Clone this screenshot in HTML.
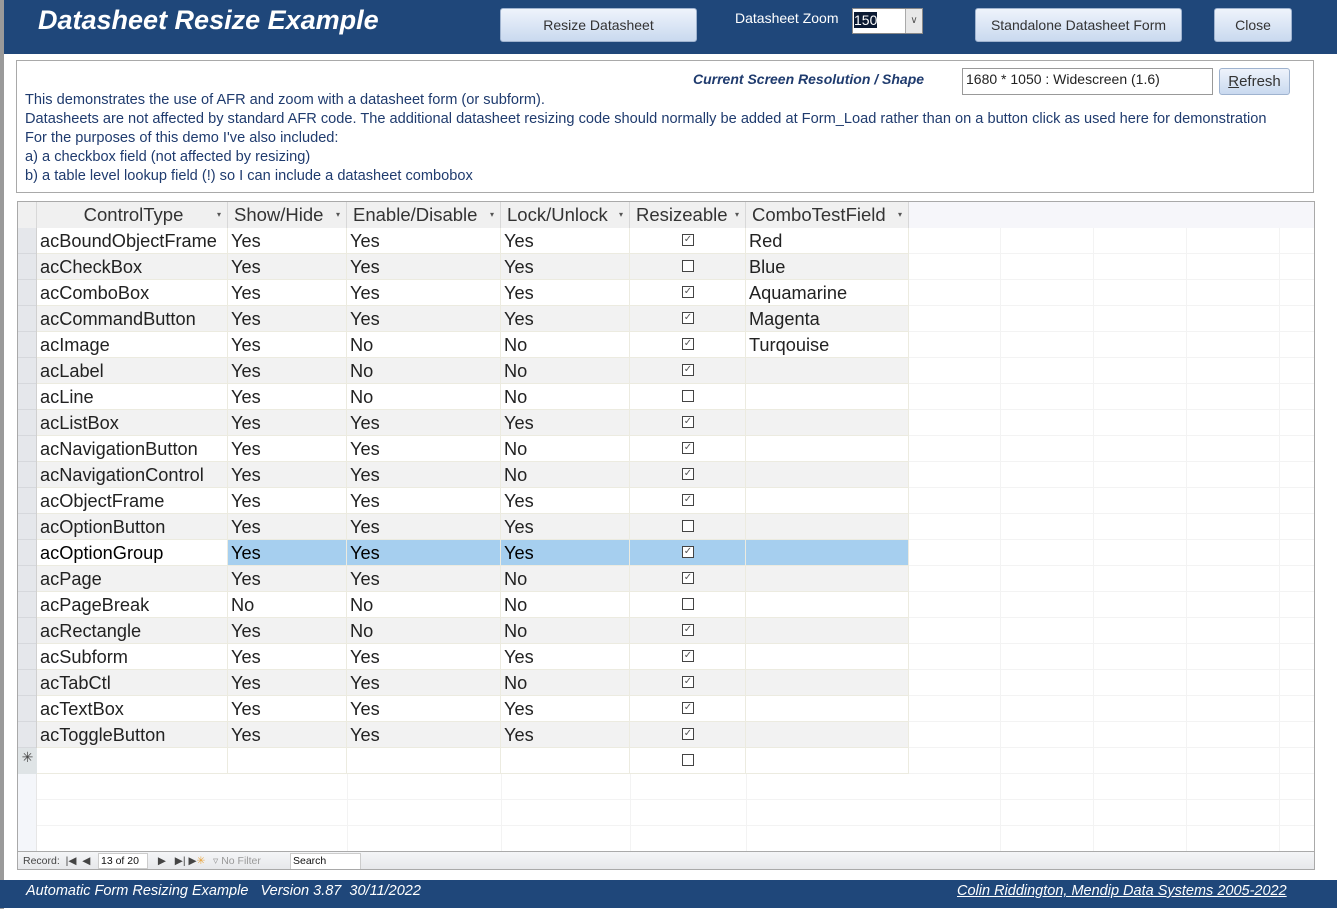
<!DOCTYPE html>
<html><head><meta charset="utf-8"><style>
*{box-sizing:border-box;margin:0;padding:0}
body{width:1337px;height:909px;position:relative;background:#fff;font-family:"Liberation Sans",sans-serif;overflow:hidden}
.a{position:absolute}
.btn{position:absolute;background:linear-gradient(#eef3fb,#c9d9ef);border:1px solid #9fb3cf;border-radius:3px;color:#333;font-size:14px;text-align:center}
.t{font-size:14.6px;color:#1f3b6e;position:absolute;left:25px;white-space:nowrap}
.ds{position:absolute;left:17px;top:201px;width:1298px;height:669px;border:1px solid #a9a9a9;background:#fff;overflow:hidden}
.row{position:absolute;left:0;height:26px;width:1296px}
.c{position:absolute;top:0;height:26px;border-right:1px solid #ecebe0;border-bottom:1px solid #ecebe0;font-size:18.2px;line-height:26px;padding-left:3px;white-space:nowrap;color:#222}
.hd .c{background:#f0f0f0;border-right:1px solid #d8d8d8;border-bottom:none;color:#333;text-align:center;font-size:18.5px}
.arr{position:absolute;right:6px;top:0;font-size:8px;color:#555}
.cb{position:absolute;left:52px;top:6px;width:12px;height:12px;border:1px solid #444;background:#fff;font-size:10px;line-height:10px;text-align:center;color:#555}
</style></head><body>
<div class="a" style="left:0;top:0;width:1337px;height:54px;background:#1f477a"></div>
<div class="a" style="left:0;top:0;width:4px;height:909px;background:#9a9a9a"></div>
<div class="a" style="left:38px;top:5px;font-size:27px;font-weight:bold;font-style:italic;color:#fff">Datasheet Resize Example</div>
<div class="btn" style="left:500px;top:8px;width:197px;height:34px;line-height:32px">Resize Datasheet</div>
<div class="a" style="left:735px;top:10px;font-size:14px;color:#fff">Datasheet Zoom</div>
<div class="a" style="left:852px;top:8px;width:71px;height:26px;background:#fff;border:1px solid #888"><span style="background:#0b1a33;color:#fff;font-size:14px;position:absolute;left:1px;top:3px">150</span><div style="position:absolute;right:0;top:0;width:17px;height:24px;background:#e8e8e8;border-left:1px solid #aaa;font-size:10px;text-align:center;line-height:24px;color:#555">&#8744;</div></div>
<div class="btn" style="left:975px;top:8px;width:207px;height:34px;line-height:32px">Standalone Datasheet Form</div>
<div class="btn" style="left:1214px;top:8px;width:78px;height:34px;line-height:32px">Close</div>

<div class="a" style="left:16px;top:60px;width:1298px;height:133px;border:1px solid #a9a9a9"></div>
<div class="a" style="left:693px;top:71px;font-size:14px;font-weight:bold;font-style:italic;color:#1f3b6e">Current Screen Resolution / Shape</div>
<div class="a" style="left:962px;top:68px;width:251px;height:27px;border:1px solid #999;font-size:14px;padding:2px 3px;color:#222">1680 * 1050 : Widescreen (1.6)</div>
<div class="btn" style="left:1219px;top:68px;width:71px;height:27px;line-height:26px;font-size:15px"><u>R</u>efresh</div>
<div class="t" style="top:92px">This demonstrates the use of AFR and zoom with a datasheet form (or subform).</div>
<div class="t" style="top:111px">Datasheets are not affected by standard AFR code. The additional datasheet resizing code should normally be added at Form_Load rather than on a button click as used here for demonstration</div>
<div class="t" style="top:130px">For the purposes of this demo I've also included:</div>
<div class="t" style="top:149px">a) a checkbox field (not affected by resizing)</div>
<div class="t" style="top:168px">b) a table level lookup field (!) so I can include a datasheet combobox</div>

<div class="ds">
<div class="a" style="left:0;top:0;width:1296px;height:650px;background:repeating-linear-gradient(180deg,transparent 0 25px,#f3f3f3 25px 26px)"></div>
<div class="a" style="left:890px;top:0;width:406px;height:650px;background:repeating-linear-gradient(90deg,transparent 0 92px,#f3f3f3 92px 93px)"></div>
<div class="a" style="left:210px;top:572px;width:520px;height:78px;background:linear-gradient(90deg,transparent 0 119px,#f3f3f3 119px 120px,transparent 120px 273px,#f3f3f3 273px 274px,transparent 274px 402px,#f3f3f3 402px 403px,transparent 403px 518px,#f3f3f3 518px 519px,transparent 519px)"></div>
<div class="a" style="left:890px;top:0;width:406px;height:26px;background:#f6f6fa"></div>
<div class="row hd" style="top:0">
<div class="c" style="left:0;width:19px;background:#f0f0f0"></div>
<div class="c" style="left:19px;width:191px">ControlType<span class="arr">&#9662;</span></div>
<div class="c" style="left:210px;width:119px;text-align:left;padding-left:6px">Show/Hide<span class="arr">&#9662;</span></div>
<div class="c" style="left:329px;width:154px;text-align:left;padding-left:6px">Enable/Disable<span class="arr">&#9662;</span></div>
<div class="c" style="left:483px;width:129px;text-align:left;padding-left:6px">Lock/Unlock<span class="arr">&#9662;</span></div>
<div class="c" style="left:612px;width:116px;text-align:left;padding-left:6px">Resizeable<span class="arr">&#9662;</span></div>
<div class="c" style="left:728px;width:163px;text-align:left;padding-left:6px">ComboTestField<span class="arr">&#9662;</span></div>
</div>
<div id="rows"></div>
<div class="a" style="left:0;top:26px;width:19px;height:520px;background:#e5e7eb;border-right:1px solid #d0d0d0;background-image:repeating-linear-gradient(180deg,transparent 0 25px,#d6d8dc 25px 26px)"></div>
<div class="a" style="left:0;top:546px;width:19px;height:26px;background:#dfe4e6;font-size:14px;text-align:center;line-height:18px;color:#444">&#10035;</div>
<div class="a" style="left:0;top:572px;width:19px;height:78px;background:#f4f6fa;border-right:1px solid #e6e6e6"></div>
<div class="a" style="left:0;top:649px;width:1296px;height:19px;background:linear-gradient(#f4f5f7,#e6e7ea);border-top:1px solid #aaa;font-size:10.5px;color:#444">
<span class="a" style="left:5px;top:3px">Record:&nbsp; |&#9664; &nbsp;&#9664;</span>
<span class="a" style="left:80px;top:1px;width:50px;height:16px;background:#fff;border:1px solid #ccc;padding-left:2px;color:#111;line-height:14px">13 of 20</span>
<span class="a" style="left:137px;top:3px">&nbsp;&#9654; &nbsp; &#9654;| &#9654;<span style="color:#e8a33b">&#10035;</span></span>
<span class="a" style="left:195px;top:3px;color:#999">&#9663; No Filter</span>
<span class="a" style="left:272px;top:1px;width:71px;height:17px;background:#fff;border:1px solid #ccc;padding-left:2px;color:#111;line-height:15px">Search</span>
</div>
</div>

<div class="a" style="left:0;top:880px;width:1337px;height:28px;background:#1f477a"></div>
<div class="a" style="left:26px;top:883px;font-size:14.5px;font-style:italic;color:#fff">Automatic Form Resizing Example &nbsp; Version 3.87 &nbsp;30/11/2022</div>
<div class="a" style="left:957px;top:883px;font-size:14.5px;font-style:italic;color:#fff;text-decoration:underline">Colin Riddington, Mendip Data Systems 2005-2022</div>

<script>
var d=[["acBoundObjectFrame","Yes","Yes","Yes",1,"Red"],["acCheckBox","Yes","Yes","Yes",0,"Blue"],["acComboBox","Yes","Yes","Yes",1,"Aquamarine"],["acCommandButton","Yes","Yes","Yes",1,"Magenta"],["acImage","Yes","No","No",1,"Turqouise"],["acLabel","Yes","No","No",1,""],["acLine","Yes","No","No",0,""],["acListBox","Yes","Yes","Yes",1,""],["acNavigationButton","Yes","Yes","No",1,""],["acNavigationControl","Yes","Yes","No",1,""],["acObjectFrame","Yes","Yes","Yes",1,""],["acOptionButton","Yes","Yes","Yes",0,""],["acOptionGroup","Yes","Yes","Yes",1,""],["acPage","Yes","Yes","No",1,""],["acPageBreak","No","No","No",0,""],["acRectangle","Yes","No","No",1,""],["acSubform","Yes","Yes","Yes",1,""],["acTabCtl","Yes","Yes","No",1,""],["acTextBox","Yes","Yes","Yes",1,""],["acToggleButton","Yes","Yes","Yes",1,""],["","","","",0,""]];
var h="",L=[[19,191],[210,119],[329,154],[483,129],[612,116],[728,163]];
d.forEach(function(r,i){var bg=i%2?"#f2f2f2":"#fff";if(i==20)bg="#fff";var sel=i==12;
h+='<div class="row" style="top:'+(26+i*26)+'px">';
for(var k=0;k<6;k++){var b=bg;if(sel&&k>0)b="#a6cfef";if(sel&&k==0)b="#fff";
var inner=k==4?'<div class="cb">'+(r[4]?'&#10003;':'')+'</div>':r[k];
h+='<div class="c" style="left:'+L[k][0]+'px;width:'+L[k][1]+'px;background:'+b+(sel?';color:#000':'')+'">'+inner+'</div>';}
h+='</div>';});
document.getElementById("rows").innerHTML=h;
</script>
</body></html>
